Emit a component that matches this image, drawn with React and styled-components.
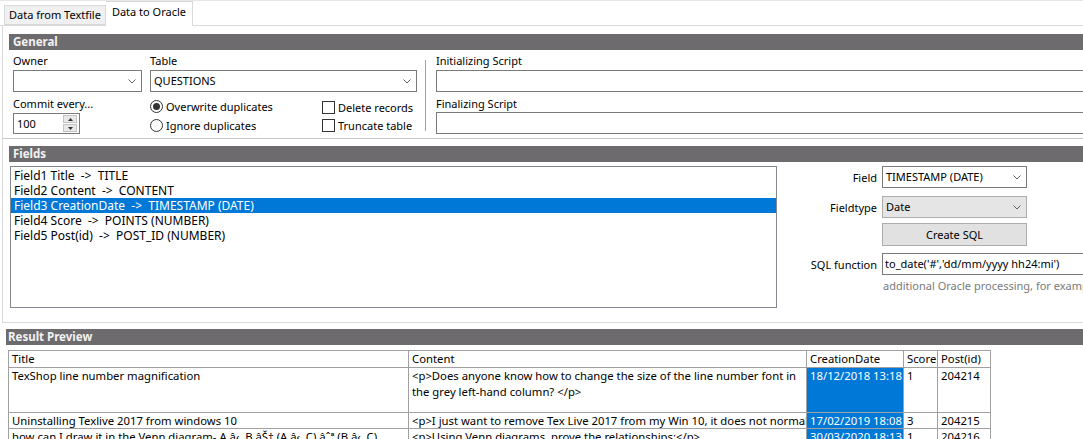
import React from 'react';
import styled, { createGlobalStyle } from 'styled-components';

const GlobalStyle = createGlobalStyle`
  html, body { margin: 0; padding: 0; background: #fff; }
  body {
    font-family: "Noto Sans", "Segoe UI", sans-serif;
    font-size: 11px;
    color: #000;
  }
  * { box-sizing: border-box; }
`;

const Window = styled.div`
  width: 1083px;
  height: 439px;
  overflow: hidden;
  background: #fff;
  border-top: 1px solid #e6e6e6;
`;

/* ---------- tabs ---------- */
const TabControl = styled.div`
  width: 1120px;
`;

const TabStrip = styled.div`
  display: flex;
  align-items: flex-end;
  height: 25px;
  padding-left: 4px;
  border-bottom: 1px solid #d9d9d9;
`;

const Tab = styled.div`
  height: ${p => (p.$active ? 25 : 20)}px;
  margin-bottom: ${p => (p.$active ? -1 : 0)}px;
  padding: 0 ${p => (p.$active ? 6 : 4)}px;
  padding-top: ${p => (p.$active ? 2 : 1)}px;
  line-height: 16px;
  background: ${p => (p.$active ? '#fff' : '#f0f0f0')};
  border: 1px solid #d9d9d9;
  border-bottom: ${p => (p.$active ? 'none' : '1px solid #d9d9d9')};
  border-left: ${p => (p.$active ? 'none' : '1px solid #d9d9d9')};
  white-space: nowrap;
`;

const TabPanel = styled.div`
  margin-left: 2px;
  border-left: 1px solid #d9d9d9;
  border-bottom: 1px solid #d9d9d9;
  padding-top: 8px;
`;

/* ---------- sections ---------- */
const Section = styled.section`
  border-bottom: ${p => (p.$divider ? '1px solid #c8c8c8' : 'none')};
  margin-top: ${p => p.$mt || 0}px;
`;

const SectionHeader = styled.div`
  height: 16px;
  margin-left: ${p => p.$ml}px;
  padding-left: ${p => p.$pl}px;
  background: #6d6b6e;
  color: #f2f2f2;
  font-weight: bold;
  font-size: 11.5px;
  line-height: 16px;
`;

const Label = styled.div`
  height: 16px;
  line-height: 16px;
  white-space: nowrap;
  margin-top: ${p => p.$mt || 0}px;
`;

const Field = styled.div`
  display: flex;
  flex-direction: column;
  gap: ${p => p.$gap ?? 1}px;
`;

/* ---------- general ---------- */
const GeneralBody = styled.div`
  display: flex;
  padding: 3px 0 4px 10px;
`;

const GeneralLeft = styled.div`
  display: grid;
  grid-template-columns: 129px 164px 95px;
  column-gap: 8px;
  row-gap: 4px;
`;

const SpanField = styled(Field)`
  grid-column: span 2;
`;

const VSeparator = styled.div`
  width: 1px;
  height: 71px;
  margin: 7px 10px 0 8px;
  background: #a0a0a0;
`;

const GeneralRight = styled.div`
  flex: 1;
  display: flex;
  flex-direction: column;
`;

const ComboBox = styled.div`
  display: flex;
  align-items: center;
  justify-content: space-between;
  width: ${p => p.$w}px;
  height: 22px;
  border: 1px solid ${p => (p.$flat ? '#adadad' : '#7a7a7a')};
  background: ${p => (p.$flat ? '#e5e5e5' : '#fff')};
  padding: 0 5px 0 3px;
  line-height: 20px;
  white-space: nowrap;
`;

const TextBox = styled.div`
  width: ${p => (p.$w ? `${p.$w}px` : '100%')};
  height: ${p => p.$h || 22}px;
  border: 1px solid #7a7a7a;
  background: #fff;
  padding: 0 2px;
  line-height: ${p => (p.$h || 22) - 2}px;
  white-space: nowrap;
  overflow: hidden;
`;

const Spinner = styled.div`
  display: flex;
  align-items: center;
  justify-content: space-between;
  width: 67px;
  height: 21px;
  border: 1px solid #7a7a7a;
  padding: 0 2px 0 3px;
`;

const SpinButtons = styled.div`
  display: flex;
  flex-direction: column;
  gap: 1px;
`;

const SpinButton = styled.div`
  width: 14px;
  height: 8px;
  background: #e8e8e8;
  border: 1px solid #c4c4c4;
  display: flex;
  align-items: center;
  justify-content: center;
`;

const OptionList = styled.div`
  display: flex;
  flex-direction: column;
  gap: ${p => p.$gap}px;
  padding-top: ${p => p.$pt}px;
`;

const Option = styled.label`
  display: flex;
  align-items: center;
  gap: 3px;
  height: 13px;
  white-space: nowrap;
`;

const RadioCircle = styled.span`
  width: 13px;
  height: 13px;
  border-radius: 50%;
  border: 1px solid #333;
  background: #fff;
  display: flex;
  align-items: center;
  justify-content: center;
  &::after {
    content: '';
    width: 7px;
    height: 7px;
    border-radius: 50%;
    background: ${p => (p.$checked ? '#333' : 'transparent')};
  }
`;

const CheckBox = styled.span`
  width: 13px;
  height: 13px;
  border: 1px solid #333;
  background: #fff;
`;

/* ---------- fields ---------- */
const FieldsBody = styled.div`
  display: flex;
  padding: 4px 0 14px 7px;
`;

const ListBox = styled.div`
  width: 767px;
  height: 142px;
  border: 1px solid #828790;
  padding: 1px 0;
  background: #fff;
`;

const ListItem = styled.div`
  height: 15px;
  line-height: 15px;
  padding-left: 3px;
  font-size: 12px;
  white-space: pre;
  background: ${p => (p.$selected ? '#0078d7' : 'transparent')};
  color: ${p => (p.$selected ? '#fff' : '#000')};
`;

const FieldForm = styled.div`
  display: grid;
  grid-template-columns: 100px 145px;
  column-gap: 5px;
  align-items: center;
  align-content: start;
`;

const FormLabel = styled.div`
  text-align: right;
  white-space: nowrap;
  margin-top: ${p => p.$mt || 0}px;
`;

const FormControl = styled.div`
  margin-top: ${p => p.$mt || 0}px;
  width: ${p => (p.$w ? `${p.$w}px` : 'auto')};
`;

const Button = styled.div`
  height: 23px;
  border: 1px solid #adadad;
  background: #e1e1e1;
  text-align: center;
  line-height: 21px;
`;

const Hint = styled.div`
  grid-column: 2;
  margin-top: 3px;
  padding-left: 1px;
  color: #7a7a7a;
  white-space: nowrap;
  line-height: 15px;
`;

/* ---------- result preview ---------- */
const Preview = styled.div`
  padding-top: 6px;
`;

const Grid = styled.table`
  border-collapse: separate;
  border-spacing: 0;
  table-layout: fixed;
  width: 983px;
  margin: 5px 0 0 8px;
  border-top: 1px solid #a0a0a0;
  border-left: 1px solid #a0a0a0;
  font-size: 11.3px;
`;

const Col = styled.col`
  width: ${p => p.$w}px;
`;

const Th = styled.th`
  height: 17px;
  padding: 0 3px;
  font-weight: normal;
  text-align: left;
  line-height: 16px;
  border-right: 1px solid #a0a0a0;
  border-bottom: 1px solid #a0a0a0;
  white-space: nowrap;
  overflow: hidden;
`;

const Td = styled.td`
  height: ${p => p.$h}px;
  padding: 0;
  vertical-align: top;
  border-right: 1px solid #a0a0a0;
  border-bottom: 1px solid #a0a0a0;
  background: ${p => (p.$selected ? '#0078d7' : '#fff')};
  color: ${p => (p.$selected ? '#fff' : '#000')};
`;

const CellText = styled.div`
  padding: 0 0 0 3px;
  line-height: 16px;
  max-height: ${p => p.$h - 1}px;
  white-space: pre;
  overflow: hidden;
`;

const Chevron = () => (
  <svg width="8" height="5" viewBox="0 0 8 5">
    <polyline points="0.5,0.5 4,4 7.5,0.5" fill="none" stroke="#5f5f5f" strokeWidth="1" />
  </svg>
);

const Arrow = ({ up }) => (
  <svg width="5" height="3" viewBox="0 0 5 3">
    <polygon points={up ? '0,3 5,3 2.5,0' : '0,0 5,0 2.5,3'} fill="#333" />
  </svg>
);

const fields = [
  'Field1 Title  ->  TITLE',
  'Field2 Content  ->  CONTENT',
  'Field3 CreationDate  ->  TIMESTAMP (DATE)',
  'Field4 Score  ->  POINTS (NUMBER)',
  'Field5 Post(id)  ->  POST_ID (NUMBER)',
];

const columns = [
  { name: 'Title', w: 400 },
  { name: 'Content', w: 398 },
  { name: 'CreationDate', w: 97 },
  { name: 'Score', w: 34 },
  { name: 'Post(id)', w: 53 },
];

const rows = [
  {
    h: 45,
    cells: [
      'TexShop line number magnification',
      '<p>Does anyone know how to change the size of the line number font in\nthe grey left-hand column? </p>',
      '18/12/2018 13:18',
      '1',
      '204214',
    ],
  },
  {
    h: 16,
    cells: [
      'Uninstalling Texlive 2017 from windows 10',
      '<p>I just want to remove Tex Live 2017 from my Win 10, it does not normally work</p>',
      '17/02/2019 18:08',
      '3',
      '204215',
    ],
  },
  {
    h: 16,
    cells: [
      'how can I draw it in the Venn diagram- A \u00e2\u2039\u201a B \u00e2\u0160\u2020 (A \u00e2\u2039\u201a C) \u00e2\u02c6\u00aa (B \u00e2\u2039\u201a C)',
      '<p>Using Venn diagrams, prove the relationships:</p>',
      '30/03/2020 18:13',
      '1',
      '204216',
    ],
  },
];

export default function App() {
  return (
    <>
      <GlobalStyle />
      <Window>
        <TabControl>
          <TabStrip>
            <Tab>Data from Textfile</Tab>
            <Tab $active>Data to Oracle</Tab>
          </TabStrip>
          <TabPanel>
            <Section $divider>
              <SectionHeader $ml={6} $pl={4}>General</SectionHeader>
              <GeneralBody>
                <GeneralLeft>
                  <Field>
                    <Label>Owner</Label>
                    <ComboBox $w={129}>
                      <span />
                      <Chevron />
                    </ComboBox>
                  </Field>
                  <SpanField>
                    <Label>Table</Label>
                    <ComboBox $w={267}>
                      <span>QUESTIONS</span>
                      <Chevron />
                    </ComboBox>
                  </SpanField>
                  <Field>
                    <Label>Commit every...</Label>
                    <Spinner>
                      <span>100</span>
                      <SpinButtons>
                        <SpinButton><Arrow up /></SpinButton>
                        <SpinButton><Arrow /></SpinButton>
                      </SpinButtons>
                    </Spinner>
                  </Field>
                  <OptionList $gap={6} $pt={4}>
                    <Option><RadioCircle $checked />Overwrite duplicates</Option>
                    <Option><RadioCircle />Ignore duplicates</Option>
                  </OptionList>
                  <OptionList $gap={5} $pt={5}>
                    <Option><CheckBox />Delete records</Option>
                    <Option><CheckBox />Truncate table</Option>
                  </OptionList>
                </GeneralLeft>
                <VSeparator />
                <GeneralRight>
                  <Field>
                    <Label>Initializing Script</Label>
                    <TextBox />
                  </Field>
                  <Field $gap={0}>
                    <Label $mt={4}>Finalizing Script</Label>
                    <TextBox />
                  </Field>
                </GeneralRight>
              </GeneralBody>
            </Section>

            <Section $mt={7}>
              <SectionHeader $ml={6} $pl={4}>Fields</SectionHeader>
              <FieldsBody>
                <ListBox>
                  {fields.map((f, i) => (
                    <ListItem key={f} $selected={i === 2}>{f}</ListItem>
                  ))}
                </ListBox>
                <FieldForm>
                  <FormLabel>Field</FormLabel>
                  <FormControl>
                    <ComboBox $w={145}>
                      <span>TIMESTAMP (DATE)</span>
                      <Chevron />
                    </ComboBox>
                  </FormControl>
                  <FormLabel $mt={8}>Fieldtype</FormLabel>
                  <FormControl $mt={8}>
                    <ComboBox $w={145} $flat>
                      <span>Date</span>
                      <Chevron />
                    </ComboBox>
                  </FormControl>
                  <span />
                  <FormControl $mt={5}>
                    <Button>Create SQL</Button>
                  </FormControl>
                  <FormLabel $mt={7}>SQL function</FormLabel>
                  <FormControl $mt={7} $w={220}>
                    <TextBox>to_date('#','dd/mm/yyyy hh24:mi')</TextBox>
                  </FormControl>
                  <Hint>additional Oracle processing, for example</Hint>
                </FieldForm>
              </FieldsBody>
            </Section>
          </TabPanel>
        </TabControl>

        <Preview>
          <SectionHeader $ml={6} $pl={2}>Result Preview</SectionHeader>
          <Grid>
            <colgroup>
              {columns.map(c => <Col key={c.name} $w={c.w} />)}
            </colgroup>
            <thead>
              <tr>
                {columns.map(c => <Th key={c.name}>{c.name}</Th>)}
              </tr>
            </thead>
            <tbody>
              {rows.map((r, ri) => (
                <tr key={ri}>
                  {r.cells.map((c, ci) => (
                    <Td key={ci} $h={r.h} $selected={ci === 2}>
                      <CellText $h={r.h}>{c}</CellText>
                    </Td>
                  ))}
                </tr>
              ))}
            </tbody>
          </Grid>
        </Preview>
      </Window>
    </>
  );
}
